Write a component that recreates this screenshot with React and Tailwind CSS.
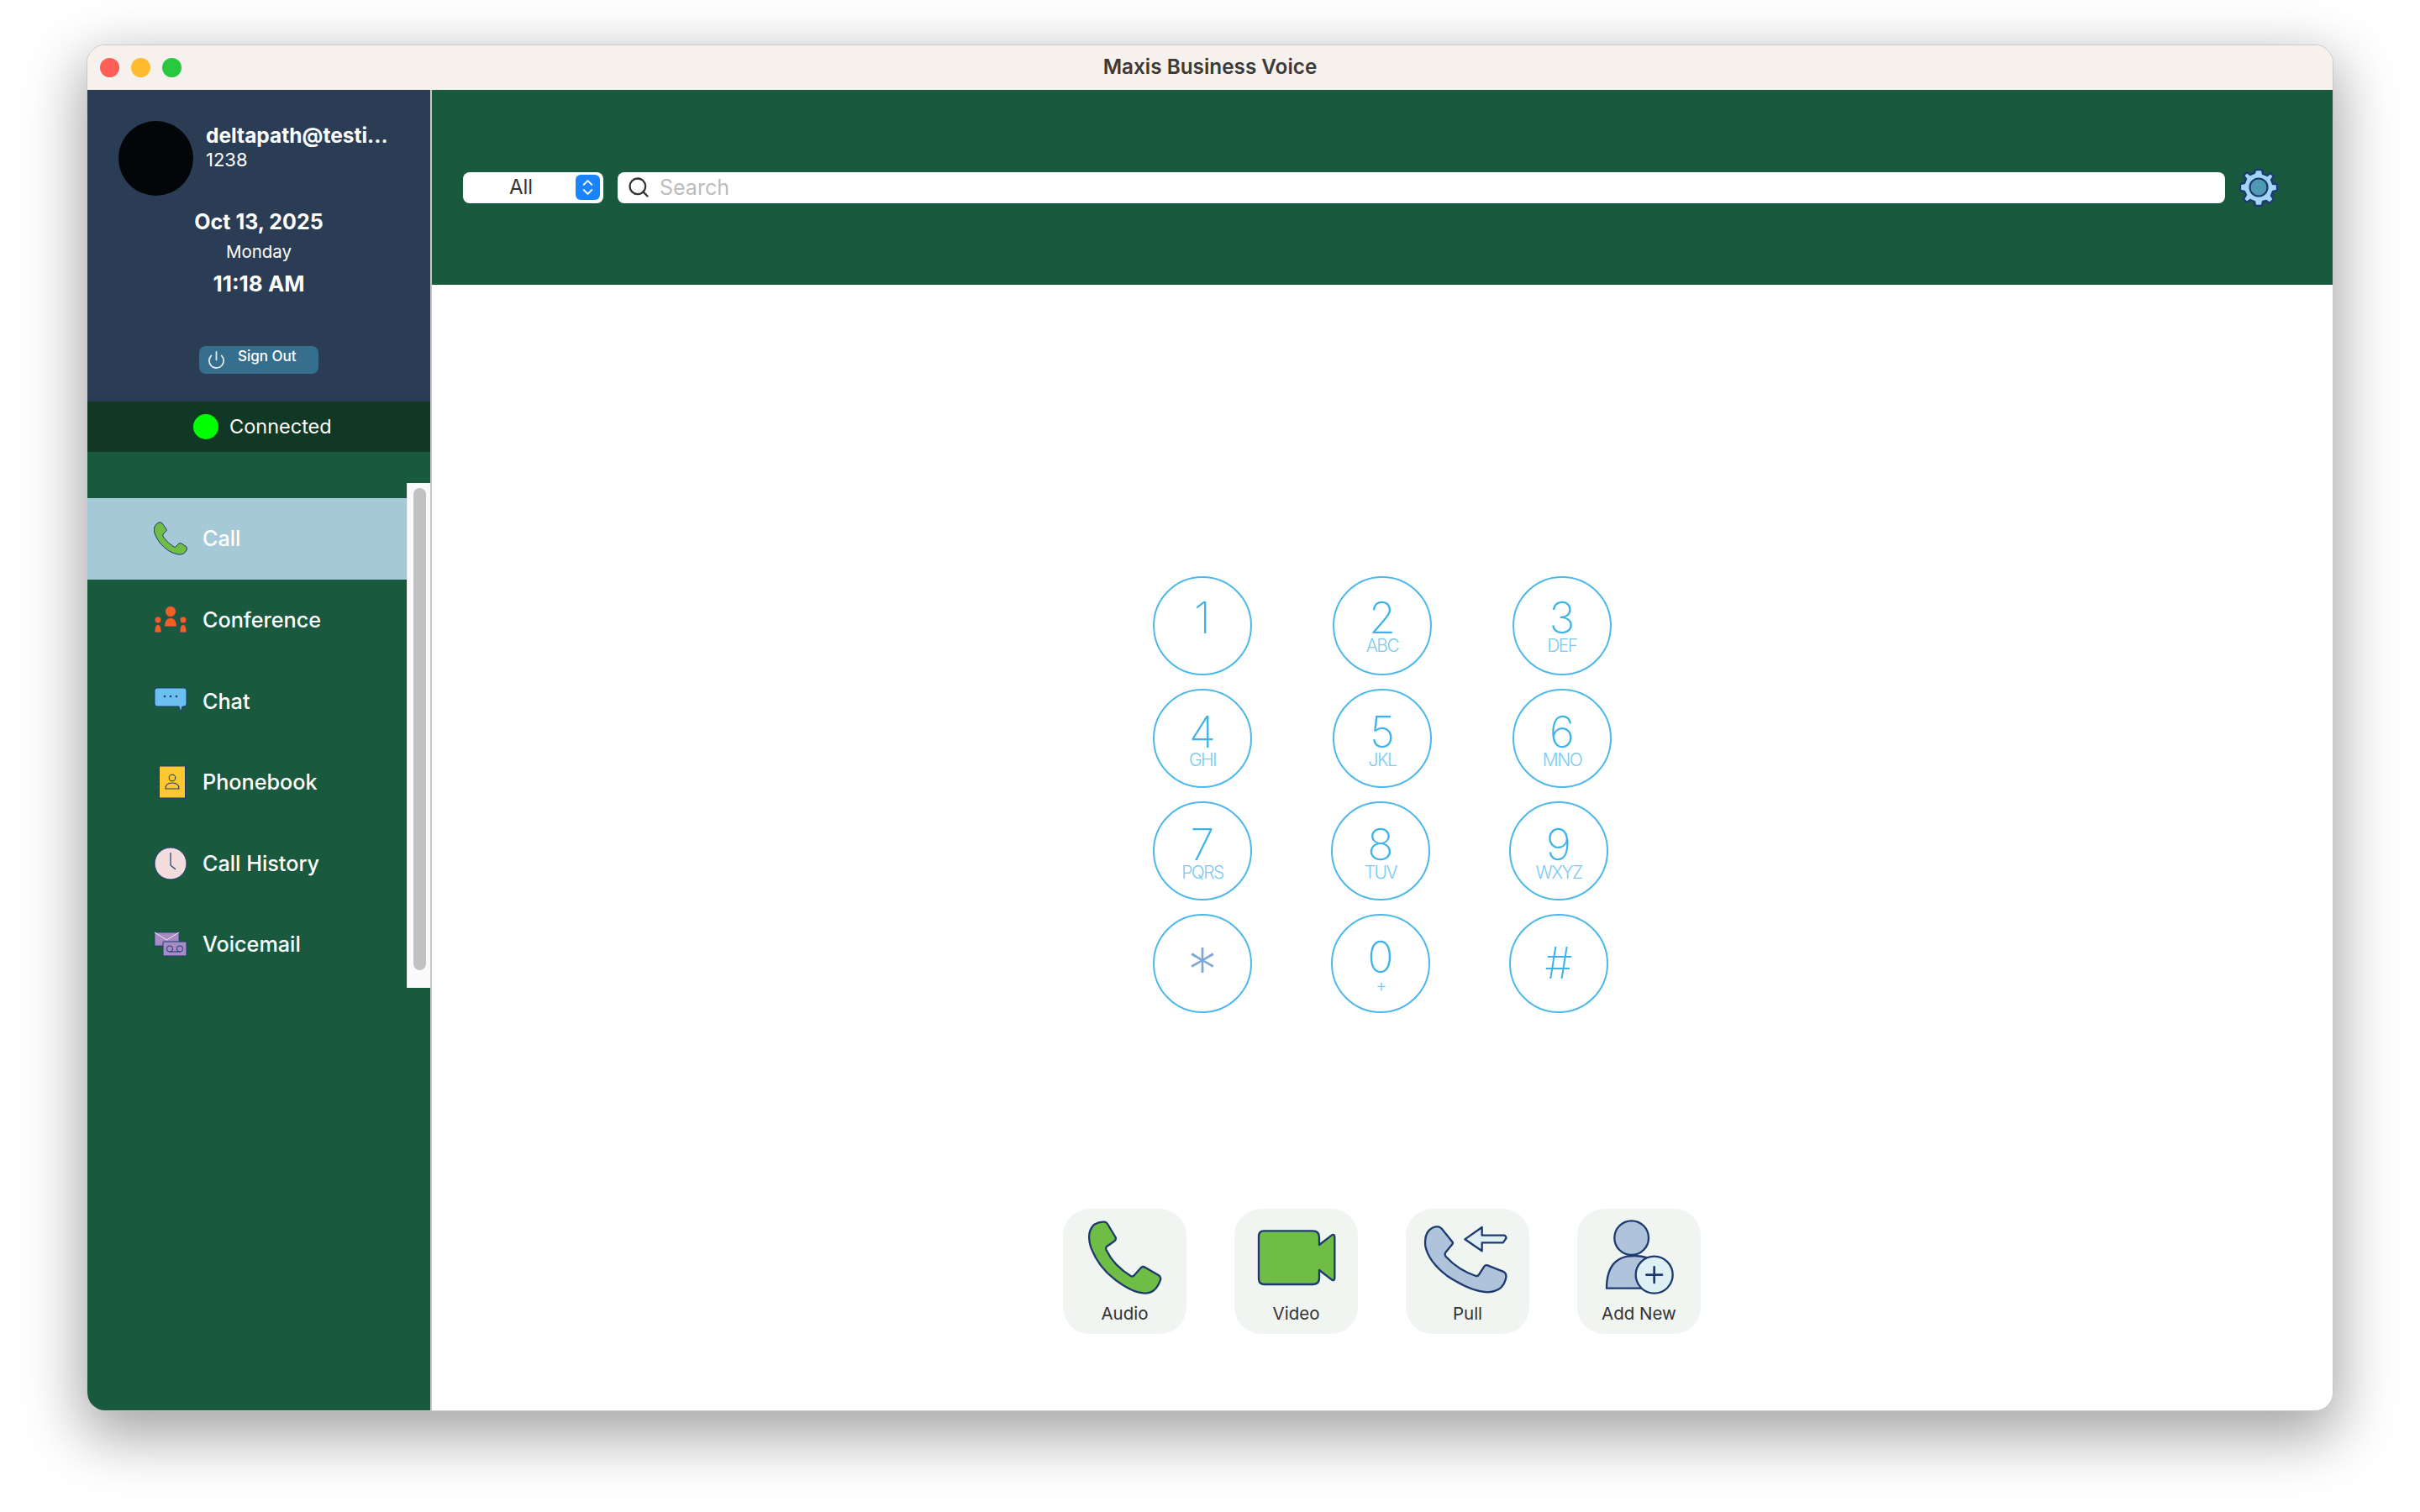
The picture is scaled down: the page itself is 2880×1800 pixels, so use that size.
import { Power, Search, ChevronUp, ChevronDown } from "lucide-react";

const NAVY = "#1c3a70";

// ─── Sidebar icons ───────────────────────────────────────────────────────────
function CallIcon() {
  return (
    <svg viewBox="0 0 40 40" className="w-10 h-10">
      <path d="M6 1 Q8 0 10 2 L15 9 Q16 11 14 12 L11 15 Q10 17 12 19 Q17 26 24 30 Q26 31 27 29 L30 26 Q31 25 33 26 L39 30 Q40 31 39 34 Q36 40 29 39 Q17 37 7 25 Q-2 12 1 6 Q3 2 6 1Z" fill="#6fbd44" stroke={NAVY} strokeWidth="1" />
    </svg>
  );
}

function ConferenceIcon() {
  return (
    <svg viewBox="0 0 40 40" className="w-10 h-10">
      <g fill="#f26122" stroke={NAVY} strokeWidth="0.6">
        <circle cx="20" cy="10" r="6.4" />
        <path d="M12.5 28 Q13 17.5 20 17.5 Q27 17.5 27.5 28Z" />
        <circle cx="5" cy="20" r="3.9" />
        <path d="M1 35 Q1 25.5 5 25.5 Q9 25.5 9 35Z" />
        <circle cx="35" cy="20" r="3.9" />
        <path d="M31 35 Q31 25.5 35 25.5 Q39 25.5 39 35Z" />
      </g>
    </svg>
  );
}

function ChatIcon() {
  return (
    <svg viewBox="0 0 40 40" className="w-10 h-10">
      <path d="M4 5 L36 5 Q39 5 39 8 L39 24 Q39 27 36 27 L34 27 L32 34 L30 27 L4 27 Q1 27 1 24 L1 8 Q1 5 4 5Z" fill="#6cc0f0" stroke={NAVY} strokeWidth="1" />
      <circle cx="13" cy="15" r="1.3" fill={NAVY} />
      <circle cx="20" cy="15" r="1.3" fill={NAVY} />
      <circle cx="27" cy="15" r="1.3" fill={NAVY} />
    </svg>
  );
}

function PhonebookIcon() {
  return (
    <svg viewBox="0 0 40 40" className="w-10 h-10">
      <g fill="none" stroke={NAVY} strokeWidth="1">
        <circle cx="5" cy="8" r="3" />
        <circle cx="5" cy="20" r="3" />
        <circle cx="5" cy="32" r="3" />
      </g>
      <rect x="6.5" y="1" width="31" height="38" fill="#fdc82f" stroke={NAVY} strokeWidth="1" />
      <circle cx="22" cy="15" r="3.8" fill="none" stroke={NAVY} strokeWidth="1.1" />
      <path d="M14 28 Q14 21 22 21 Q30 21 30 28Z" fill="none" stroke={NAVY} strokeWidth="1.1" />
    </svg>
  );
}

function ClockIcon() {
  return (
    <svg viewBox="0 0 40 40" className="w-10 h-10">
      <circle cx="20" cy="20" r="19" fill="#f3dcdc" stroke={NAVY} strokeWidth="1" />
      <path d="M20 7 L20 22 L26 27" fill="none" stroke={NAVY} strokeWidth="1.2" />
    </svg>
  );
}

function VoicemailIcon() {
  return (
    <svg viewBox="0 0 40 40" className="w-10 h-10">
      <path d="M1 6 L30 6 L30 22 L1 22Z" fill="#a78bc5" stroke={NAVY} strokeWidth="0.8" />
      <path d="M1 6 L15.5 15 L30 6" fill="none" stroke="#f0ecf6" strokeWidth="1" />
      <rect x="11" y="17" width="28" height="17" rx="1" fill="#a78bc5" stroke={NAVY} strokeWidth="1" />
      <circle cx="19" cy="25.5" r="3.6" fill="none" stroke={NAVY} strokeWidth="1" />
      <circle cx="31" cy="25.5" r="3.6" fill="none" stroke={NAVY} strokeWidth="1" />
      <path d="M19 29 L31 29" stroke={NAVY} strokeWidth="1" />
    </svg>
  );
}

const navItems = [
  { label: "Call", icon: <CallIcon />, active: true },
  { label: "Conference", icon: <ConferenceIcon /> },
  { label: "Chat", icon: <ChatIcon /> },
  { label: "Phonebook", icon: <PhonebookIcon /> },
  { label: "Call History", icon: <ClockIcon /> },
  { label: "Voicemail", icon: <VoicemailIcon /> },
];

// ─── Action icons ────────────────────────────────────────────────────────────
function ActionSvg({ viewBox, children }) {
  return (
    <svg viewBox={viewBox} className="w-[110px] h-[90px]" strokeLinejoin="round" strokeLinecap="round">
      {children}
    </svg>
  );
}

const actions = [
  {
    label: "Audio",
    icon: (
      <ActionSvg viewBox="100 95 330 270">
        <path d="M190 103 Q197 102 202 110 L231 158 Q234 166 226 172 L200 190 Q194 195 198 204 Q225 260 285 296 Q293 300 298 293 L320 268 Q327 260 336 265 L385 294 Q394 300 391 310 Q375 358 335 358 Q290 356 230 310 Q170 265 143 195 Q125 140 155 112 Q172 102 190 103Z" fill="#6fbd44" stroke={NAVY} strokeWidth="7" />
      </ActionSvg>
    ),
  },
  {
    label: "Video",
    icon: (
      <ActionSvg viewBox="712 95 330 270">
        <path d="M760 135 L935 135 Q958 135 958 158 L958 185 L1003 150 Q1013 145 1013 158 L1013 302 Q1013 315 1003 310 L958 275 L958 303 Q958 326 935 326 L762 326 Q742 326 742 305 L742 155 Q742 135 760 135Z" fill="#6fbd44" stroke={NAVY} strokeWidth="7" />
      </ActionSvg>
    ),
  },
  {
    label: "Pull",
    icon: (
      <ActionSvg viewBox="125 95 330 270">
        <path d="M185 120 Q192 122 197 128 L235 175 Q238 180 232 185 L210 212 Q205 220 212 228 Q255 275 318 296 Q326 298 330 290 L348 262 Q352 256 360 258 L415 280 Q428 286 426 300 Q418 352 360 354 Q300 352 215 295 Q150 245 138 190 Q132 130 175 120Z" fill="#afc4da" stroke={NAVY} strokeWidth="7" />
        <path d="M279 165 L340 122 L340 151 L420 151 Q428 155 426 162 L415 177 L340 177 L340 207Z" fill="#dff0f5" stroke={NAVY} strokeWidth="7" />
      </ActionSvg>
    ),
  },
  {
    label: "Add New",
    icon: (
      <ActionSvg viewBox="738 95 330 270">
        <circle cx="875" cy="160" r="61" fill="#afc4da" stroke={NAVY} strokeWidth="7" />
        <path d="M786 340 Q786 240 860 226 Q900 220 935 232 L935 340Z" fill="#afc4da" stroke={NAVY} strokeWidth="7" />
        <circle cx="956" cy="292" r="66" fill="#dff0f5" stroke={NAVY} strokeWidth="7" />
        <path d="M928 292 L984 292 M956 264 L956 320" fill="none" stroke={NAVY} strokeWidth="8" />
      </ActionSvg>
    ),
  },
];

// ─── Keypad ──────────────────────────────────────────────────────────────────
const keyRows = [
  { gap: "gap-[96px]", pad: "pt-[24px]", keys: [["1", ""], ["2", "ABC"], ["3", "DEF"]] },
  { gap: "gap-[96px]", pad: "pt-[26px]", keys: [["4", "GHI"], ["5", "JKL"], ["6", "MNO"]] },
  { gap: "gap-[94px]", pad: "pt-[26px]", keys: [["7", "PQRS"], ["8", "TUV"], ["9", "WXYZ"]] },
  { gap: "gap-[94px]", pad: "pt-[26px]", keys: [["*", ""], ["0", "+"], ["#", ""]] },
];

function Key({ digit, letters, pad }) {
  const symbol = digit === "*" || digit === "#";
  return (
    <button className={`w-[118px] h-[118px] rounded-full border-2 border-[#4db8ec] flex flex-col items-center text-[#3eb3ea] ${symbol ? "pt-[33px]" : pad}`}>
      <span className={`font-extralight ${digit === "*" ? "text-[#7fa8d8] text-[72px] leading-[62px]" : "text-[52px] leading-[48px]"}`}>{digit}</span>
      {letters && (
        <span className="text-[21px] leading-[18px] font-light tracking-[-1.5px] text-[#7cc9f0]">{letters}</span>
      )}
    </button>
  );
}

export default function App() {
  return (
    <div className="w-full h-[1800px] overflow-hidden bg-white pt-[53px]" style={{ fontFamily: "Inter, 'Liberation Sans', sans-serif" }}>
      <div className="mx-auto w-[2674px] h-[1627px] rounded-[22px] border border-[#c9c9c9] overflow-hidden flex flex-col bg-white shadow-[0_24px_70px_6px_rgba(0,0,0,0.36)]">

        {/* title bar */}
        <div className="h-[53px] shrink-0 relative flex items-center justify-center bg-[#f6f1ed]">
          <div className="absolute left-[15px] top-[15px] flex gap-[14px]">
            <span className="w-[23px] h-[23px] rounded-full bg-[#ff5f57]" />
            <span className="w-[23px] h-[23px] rounded-full bg-[#febc2e]" />
            <span className="w-[23px] h-[23px] rounded-full bg-[#28c840]" />
          </div>
          <span className="-mt-[2px] text-[24.3px] font-semibold text-[#3a3a3a]">Maxis Business Voice</span>
        </div>

        <div className="flex flex-1 min-h-0">
          {/* sidebar */}
          <aside className="w-[410px] shrink-0 border-r-2 border-[#c8c8c8] bg-[#195a3f] flex flex-col text-white">
            <div className="h-[371px] bg-[#2b3c55] flex flex-col items-center">
              <div className="w-full flex items-center pl-[37px] pt-[37px]">
                <div className="w-[89px] h-[89px] rounded-full bg-[#020608]" />
                <div className="ml-[15px] -mt-[29px]">
                  <div className="text-[24.5px] leading-[32px] font-bold whitespace-nowrap">deltapath@testi...</div>
                  <div className="text-[22px] leading-[26px]">1238</div>
                </div>
              </div>
              <div className="mt-[13px] text-[25px] leading-[36px] font-bold">Oct 13, 2025</div>
              <div className="text-[20.5px] leading-[36px]">Monday</div>
              <div className="text-[26px] leading-[40px] font-bold">11:18 AM</div>
              <button className="mt-[54px] w-[142px] h-[33px] rounded-[8px] bg-[#366f8d] flex items-start pl-[9px]">
                <Power size={23} strokeWidth={1.8} className="mt-[5px] text-[#e6eef2]" />
                <span className="ml-[14px] mt-[1px] text-[17px] leading-[22px] font-medium">Sign Out</span>
              </button>
            </div>
            <div className="h-[60px] bg-[#113825] flex items-center pl-[126px]">
              <span className="w-[30px] h-[30px] rounded-full bg-[#00ff00]" />
              <span className="ml-[13px] text-[23.5px]">Connected</span>
            </div>
            <nav className="flex pt-[37px]">
              <div className="flex-1 pt-[18px]">
                {navItems.map(item => (
                  <div key={item.label} className={`h-[96.6px] flex items-center pl-[79px] ${item.active ? "bg-[#a6c9d8]" : ""}`}>
                    {item.icon}
                    <span className="ml-[18px] mt-[2px] text-[25.2px] font-medium">{item.label}</span>
                  </div>
                ))}
              </div>
              <div className="w-[28px] h-[601px] bg-[#fafafa] border-l border-[#e8e8e8] pt-[6px] pl-[7px]">
                <div className="w-[15px] h-[574px] rounded-full bg-[#c1c1c1]" />
              </div>
            </nav>
          </aside>

          {/* main */}
          <main className="flex-1 min-w-0 flex flex-col">
            <header className="h-[232px] shrink-0 bg-[#195a3f] flex items-center pl-[37px] pr-[65px]">
              <div className="relative w-[167px] h-[37px] rounded-[8px] bg-white flex items-center pl-[55px] text-[24px] text-[#333]">
                All
                <span className="absolute right-[4px] top-[3px] w-[29px] h-[30px] rounded-[6px] bg-[#1a84ff] flex flex-col items-center justify-center text-white">
                  <ChevronUp size={19} strokeWidth={2.6} className="-mb-[4px]" />
                  <ChevronDown size={19} strokeWidth={2.6} className="-mt-[4px]" />
                </span>
              </div>
              <div className="flex-1 ml-[17px] h-[37px] rounded-[8px] bg-white flex items-center pl-[11px]">
                <Search size={28} strokeWidth={2} className="text-[#333]" />
                <span className="ml-[11px] mt-[2px] text-[25px] text-[#bcbcbc]">Search</span>
              </div>
              <svg viewBox="0 0 46 46" className="w-[46px] h-[46px] ml-[17px]">
                <path d="M19 2 L27 2 L28 7 L33 9 L37 6 L41 10 L38 14 L40 19 L45 19 L45 27 L40 28 L38 33 L41 37 L36 42 L32 39 L28 40 L27 45 L19 45 L18 40 L13 38 L9 41 L5 37 L8 32 L6 28 L1 27 L1 19 L6 18 L8 13 L5 9 L9 5 L13 8 L18 6Z" fill="#a3d6f5" stroke={NAVY} strokeWidth="2.4" strokeLinejoin="round" />
                <circle cx="23" cy="23" r="10.5" fill="#5099b5" stroke={NAVY} strokeWidth="2.2" />
              </svg>
            </header>

            <div className="pl-[858px] pt-[347px] flex flex-col gap-4">
              {keyRows.map((row, i) => (
                <div key={i} className={`flex ${row.gap}`}>
                  {row.keys.map(([digit, letters]) => <Key key={digit} digit={digit} letters={letters} pad={row.pad} />)}
                </div>
              ))}
            </div>

            <div className="pl-[751px] pt-[233px] flex gap-[57px]">
              {actions.map(a => (
                <div key={a.label} className="w-[147px] h-[149px] rounded-[32px] bg-[#f0f5f2] flex flex-col items-center pt-[13px]">
                  {a.icon}
                  <span className="mt-[9px] text-[20.5px] leading-[26px] text-[#333]">{a.label}</span>
                </div>
              ))}
            </div>
          </main>
        </div>
      </div>
    </div>
  );
}
